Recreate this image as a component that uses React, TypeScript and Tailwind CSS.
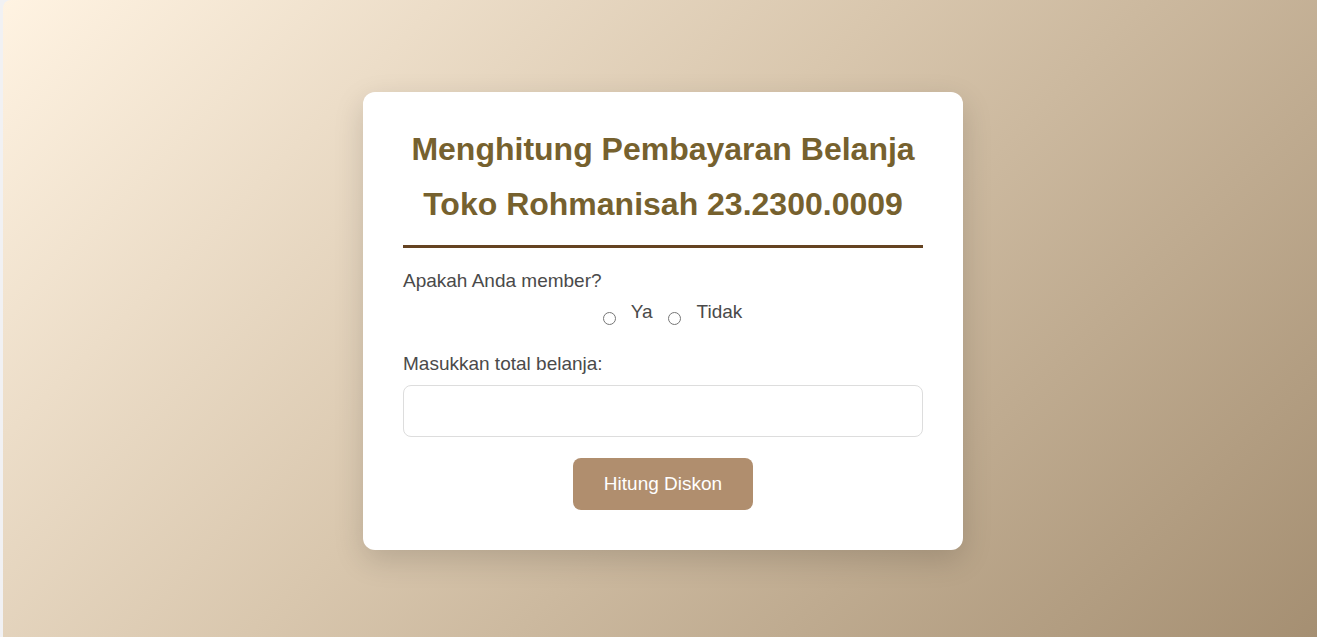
import React from "react";

const App: React.FC = () => {
    return (
        <div className="bg-[#f1f1f3] pl-[3px] font-['Liberation_Sans',Arial,sans-serif]">
            <div className="h-[637px] rounded-tl-lg bg-[linear-gradient(135deg,#fff3e2_0%,#d9c7ae_45%,#a58f72_100%)] flex items-center justify-center pt-[5px] pl-[6px]">
                {/* card */}
                <div className="w-[600px] bg-white rounded-xl shadow-[0_10px_30px_rgba(0,0,0,0.15)] px-10 pt-[30px] pb-10">
                    <h1 className="text-[32px] leading-[55px] font-bold text-[#76612e] text-center pb-[13px] border-b-[3px] border-[#654321]">
                        Menghitung Pembayaran Belanja
                        <br />
                        Toko Rohmanisah 23.2300.0009
                    </h1>

                    <p className="mt-[22px] text-[19px] leading-[21px] text-[#4a4a4a]">Apakah Anda member?</p>

                    <div className="mt-[10px] h-[25px] flex justify-center items-start text-[19px] leading-[21px] text-[#4a4a4a]">
                        <input type="radio" name="member" value="ya" className="ml-[19px] mt-[11px] w-[13px] h-[13px]" />
                        <label className="ml-[15px]">Ya</label>
                        <input type="radio" name="member" value="tidak" className="mt-[11px] ml-[15px] w-[13px] h-[13px]" />
                        <label className="ml-[16px]">Tidak</label>
                    </div>

                    <p className="mt-[27px] text-[19px] leading-[21px] text-[#4a4a4a]">Masukkan total belanja:</p>

                    <input
                        type="text"
                        className="mt-[11px] block w-full h-[52px] border border-[#dddddd] rounded-lg px-3 text-[18px] outline-none"
                    />

                    <div className="mt-[21px] flex justify-center">
                        <button className="w-[180px] h-[52px] rounded-lg bg-[#b08e6e] text-white text-[19px]">
                            Hitung Diskon
                        </button>
                    </div>
                </div>
            </div>
        </div>
    );
};

export default App;
